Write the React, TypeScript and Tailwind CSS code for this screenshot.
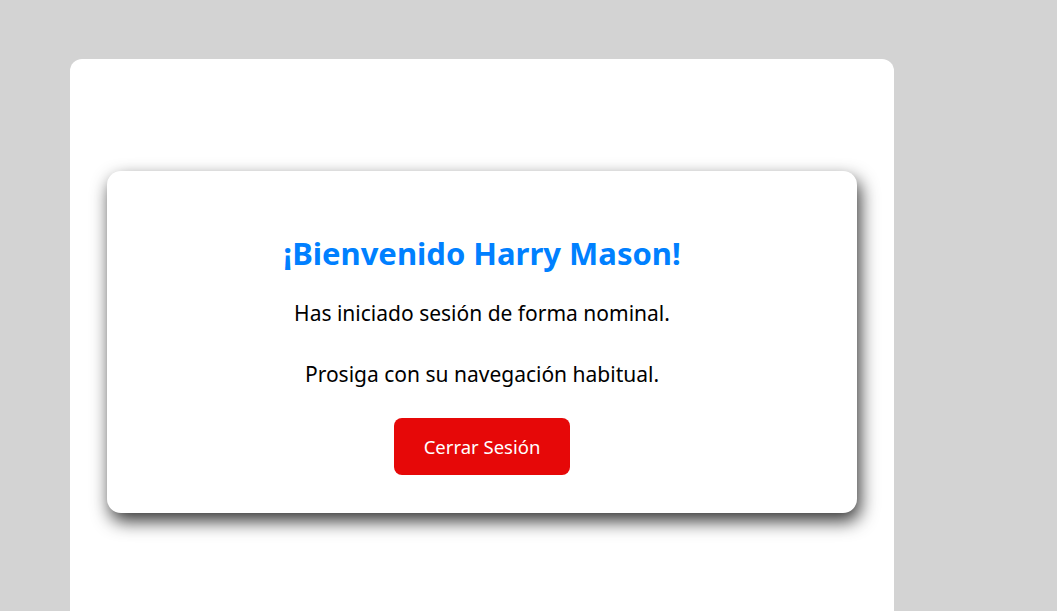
export default function App() {
  return (
    <div className="h-[611px] w-full bg-[#d3d3d3] pt-[59px] pl-[70px] overflow-hidden" style={{ fontFamily: '"Noto Sans", "Open Sans", sans-serif' }}>
      <div className="w-[824px] h-[552px] rounded-t-[12px] bg-white px-[37px] pt-[112px]">
        <div className="flex h-[342px] flex-col items-center rounded-[14px] bg-white pt-[60px] shadow-[3px_8px_18px_rgba(0,0,0,0.8)]">
          <h1 className="text-[31px] leading-[44px] font-bold text-[#0080ff]">¡Bienvenido Harry Mason!</h1>
          <p className="mt-[24px] text-[21px] leading-[28px] text-black">Has iniciado sesión de forma nominal.</p>
          <p className="mt-[33px] text-[21px] leading-[28px] text-black">Prosiga con su navegación habitual.</p>
          <button
            type="button"
            className="mt-[30px] h-[57px] w-[176px] rounded-[8px] bg-[#e60808] text-[18.5px] text-white"
          >
            Cerrar Sesión
          </button>
        </div>
      </div>
    </div>
  )
}
